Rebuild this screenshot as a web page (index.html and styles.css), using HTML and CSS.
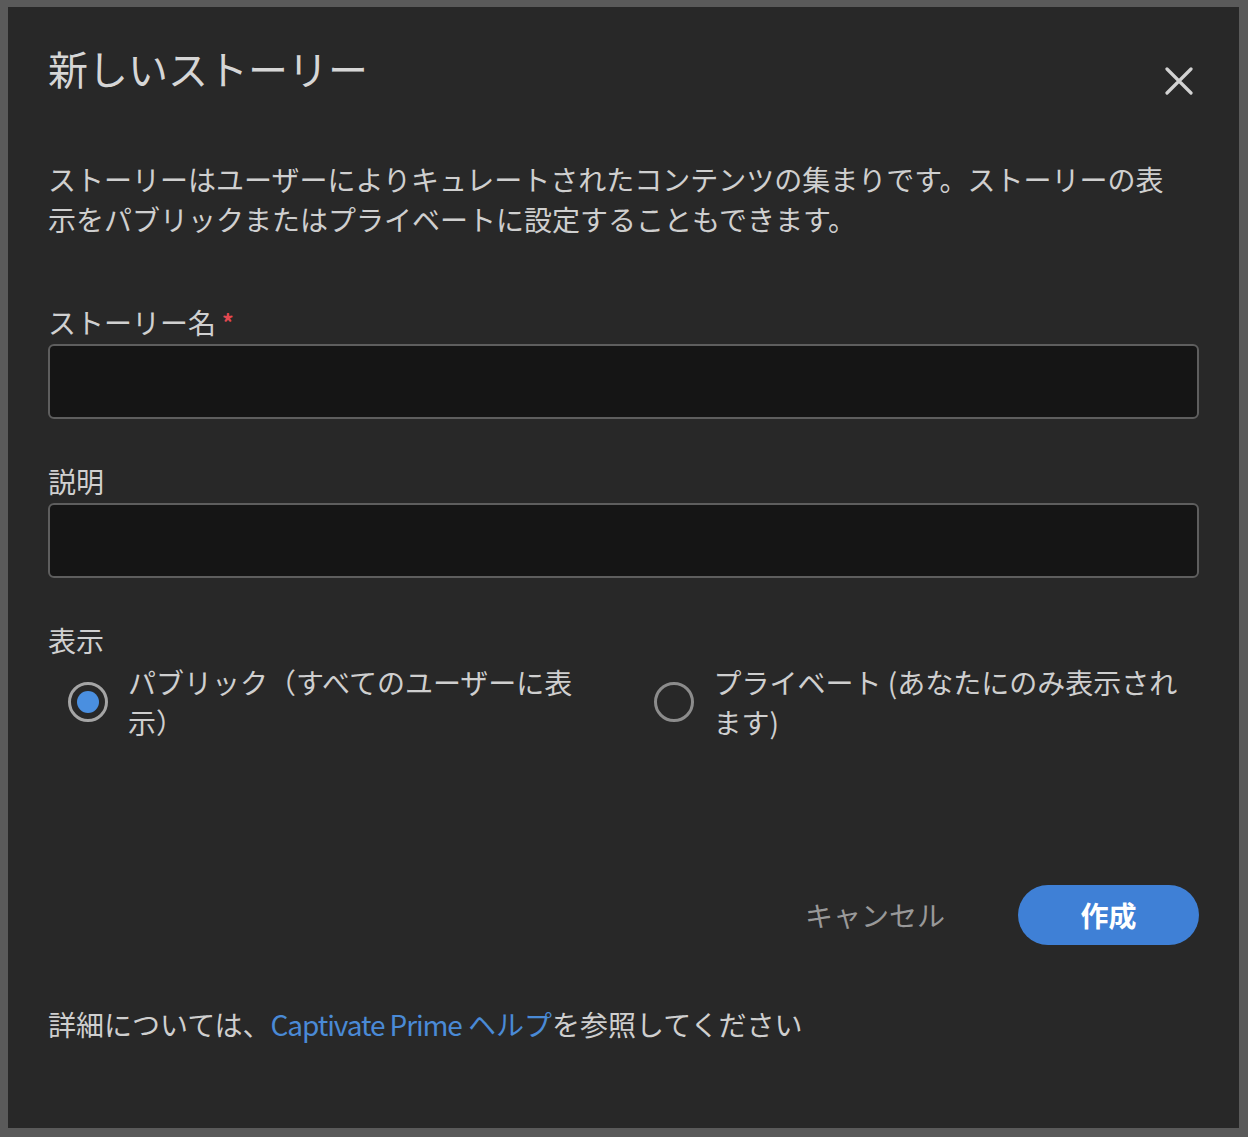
FILE: index.html
```html
<!DOCTYPE html>
<html lang="ja">
<head>
<meta charset="utf-8">
<title>新しいストーリー</title>
<link rel="stylesheet" href="styles.css">
</head>
<body>
<div class="dialog">
  <div class="header">
    <h1 class="title">新しいストーリー</h1>
    <button class="close" aria-label="閉じる">
      <svg width="28" height="28" viewBox="0 0 28 28"><path d="M2 2 L26 26 M26 2 L2 26" stroke="#d2d2d2" stroke-width="3.2" stroke-linecap="round" fill="none"/></svg>
    </button>
  </div>
  <p class="desc">ストーリーはユーザーによりキュレートされたコンテンツの集まりです。ストーリーの表示をパブリックまたはプライベートに設定することもできます。</p>

  <div class="field first">
    <label class="label">ストーリー名<span class="req">*</span></label>
    <div class="input"></div>
  </div>
  <div class="field">
    <label class="label">説明</label>
    <div class="input"></div>
  </div>
  <div class="field">
    <label class="label">表示</label>
    <div class="options">
      <div class="option">
        <span class="radio checked"><span class="dot"></span></span>
        <span class="opt-text">パブリック（すべてのユーザーに表示）</span>
      </div>
      <div class="option">
        <span class="radio"></span>
        <span class="opt-text">プライベート (あなたにのみ表示されます)</span>
      </div>
    </div>
  </div>

  <div class="actions">
    <button class="cancel">キャンセル</button>
    <button class="create">作成</button>
  </div>

  <p class="footer">詳細については、<a class="link" href="#"><span class="latin">Captivate Prime</span> ヘルプ</a>を参照してください</p>
</div>
</body>
</html>
```

FILE: styles.css
```css
* { box-sizing: border-box; }
html, body { margin: 0; }
body {
  background: #5a5a5a;
  padding: 7px 9px 9px 8px;
  font-family: "Noto Sans CJK JP", "Noto Sans", sans-serif;
  color: #d2d2d2;
}
.dialog {
  background: #282828;
  padding: 37px 40px 75px 40px;
  min-height: 1121px;
}
.header {
  display: flex;
  justify-content: space-between;
  align-items: flex-start;
}
.title {
  margin: 0;
  font-size: 40px;
  line-height: 48px;
  font-weight: 400;
  color: #d6d6d6;
}
.close {
  background: none;
  border: 0;
  padding: 0;
  margin: 23px 6px 0 0;
  width: 28px;
  height: 28px;
  display: flex;
}
.desc {
  margin: 64px 0 0 0;
  max-width: 1140px;
  font-size: 28px;
  line-height: 40px;
  color: #cfcfcf;
}
.field { margin-top: 44px; }
.field.first { margin-top: 65px; }
.label {
  display: block;
  font-size: 28px;
  line-height: 36px;
  margin-bottom: 4px;
  color: #d0d0d0;
}
.req {
  color: #e34850;
  font-size: 23px;
  font-weight: 700;
  line-height: 1;
  vertical-align: 2px;
  margin-left: 6px;
}
.input {
  height: 75px;
  border: 2px solid #5e5e5e;
  border-radius: 6px;
  background: #151515;
}
.options {
  display: grid;
  grid-template-columns: 1fr 1fr;
  column-gap: 20px;
}
.option {
  display: flex;
  align-items: center;
  gap: 20px;
  padding-left: 20px;
}
.radio {
  flex: none;
  width: 40px;
  height: 40px;
  border: 3px solid #8c8c8c;
  border-radius: 50%;
  display: flex;
  align-items: center;
  justify-content: center;
}
.radio.checked { border-color: #a5a5a5; }
.dot {
  width: 22px;
  height: 22px;
  border-radius: 50%;
  background: #4a8fe0;
}
.opt-text {
  font-size: 28px;
  line-height: 40px;
  color: #cfcfcf;
}
.actions {
  margin-top: 143px;
  display: flex;
  justify-content: flex-end;
  align-items: center;
  gap: 73px;
}
.cancel {
  background: none;
  border: 0;
  padding: 0;
  font-family: inherit;
  font-size: 28px;
  color: #999999;
}
.create {
  width: 181px;
  height: 60px;
  border: 0;
  border-radius: 30px;
  background: #3f80d6;
  color: #ffffff;
  font-family: inherit;
  font-size: 28px;
  font-weight: 700;
}
.footer {
  margin: 59px 0 0 0;
  font-size: 28px;
  line-height: 40px;
  color: #cfcfcf;
}
.link {
  color: #4a8ad6;
  text-decoration: none;
}
.latin { letter-spacing: -1.1px; }
```
